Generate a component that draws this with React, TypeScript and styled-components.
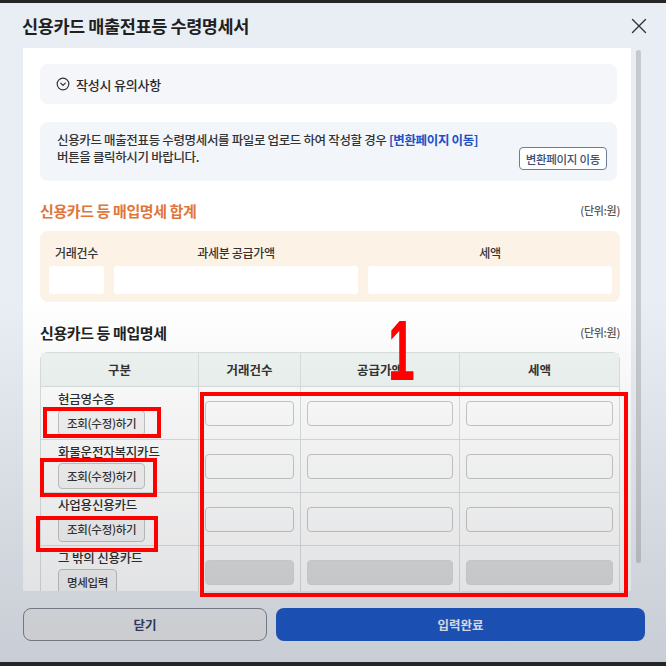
import styled, { createGlobalStyle } from "styled-components";

const GlobalStyle = createGlobalStyle`
  html, body { margin: 0; padding: 0; }
  body { font-family: "Noto Sans CJK KR", "Noto Sans", sans-serif; }
`;

const Page = styled.div`
  position: relative;
  width: 666px;
  height: 666px;
  background: #262626;
  padding: 3px 0 4px;
  box-sizing: border-box;
  overflow: hidden;
`;

const Modal = styled.div`
  height: 659px;
  background: #e9eef5;
  display: flex;
  flex-direction: column;
`;

const Header = styled.div`
  height: 45px;
  display: flex;
  align-items: center;
  justify-content: space-between;
  padding: 0 18px 0 22px;
  box-sizing: border-box;
`;

const Title = styled.h1`
  margin: 0;
  font-size: 17.5px;
  font-weight: 700;
  color: #1f1f1f;
  letter-spacing: -0.4px;
`;

const CloseButton = styled.button`
  border: 0;
  background: none;
  padding: 0;
  width: 18px;
  height: 18px;
  display: flex;
  align-items: center;
  justify-content: center;
`;

const BodyRow = styled.div`
  display: flex;
  align-items: flex-start;
  gap: 5px;
  padding-left: 23px;
`;

const Panel = styled.div`
  width: 608px;
  height: 543px;
  background: #fff;
  overflow: hidden;
  padding: 16px 11px 0 17px;
  box-sizing: border-box;
`;

const Scrollbar = styled.div`
  width: 5px;
  height: 513px;
  margin-top: 2px;
  border-radius: 3px;
  background: #c7c9cd;
`;

const NoticeBox = styled.div`
  height: 40px;
  margin-right: 3px;
  background: #f4f6fa;
  border-radius: 8px;
  display: flex;
  align-items: center;
  gap: 6px;
  padding-left: 16px;
  font-size: 13px;
  font-weight: 500;
  color: #2a2a2a;
  letter-spacing: -0.2px;
`;

const InfoBox = styled.div`
  margin: 18px 3px 0 0;
  height: 59px;
  background: #f2f5fa;
  border-radius: 8px;
  display: flex;
  justify-content: space-between;
  align-items: flex-end;
  padding: 9px 10px 11px 17px;
  box-sizing: border-box;
`;

const InfoText = styled.p`
  margin: 0;
  align-self: flex-start;
  font-size: 12.5px;
  font-weight: 500;
  line-height: 17px;
  color: #333;
  letter-spacing: -0.35px;
`;

const LinkText = styled.span`
  color: #2150c4;
  font-weight: 700;
`;

const OutlineButton = styled.button`
  height: 23px;
  padding: 0 6px;
  border: 1px solid #6f7c93;
  border-radius: 4px;
  background: #fff;
  font-family: inherit;
  font-size: 11.5px;
  font-weight: 500;
  color: #3d4f75;
  letter-spacing: -0.3px;
`;

const SectionHead = styled.div<{ $top: number }>`
  display: flex;
  justify-content: space-between;
  align-items: center;
  margin-top: ${p => p.$top}px;
  height: 20px;
`;

const SectionTitle = styled.h2<{ $accent?: boolean }>`
  margin: 0;
  font-size: 15px;
  font-weight: 700;
  letter-spacing: -0.4px;
  color: ${p => (p.$accent ? "#e0763a" : "#222")};
`;

const Unit = styled.span`
  font-size: 11px;
  font-weight: 500;
  color: #555;
  letter-spacing: -0.3px;
`;

const SumBox = styled.div`
  margin-top: 11px;
  height: 71px;
  background: #fdf2e6;
  border-radius: 8px;
  padding: 7px 8px 8px 9px;
  box-sizing: border-box;
  display: grid;
  grid-template-columns: 55px 1fr 1fr;
  grid-template-rows: 28px 28px;
  column-gap: 10px;
`;

const SumLabel = styled.span<{ $center?: boolean }>`
  font-size: 12px;
  font-weight: 500;
  color: #333;
  letter-spacing: -0.3px;
  align-self: center;
  padding-left: ${p => (p.$center ? 0 : 6)}px;
  text-align: ${p => (p.$center ? "center" : "left")};
`;

const SumInput = styled.div`
  background: #fff;
  border-radius: 3px;
`;

const Table = styled.div`
  margin-top: 10px;
  border: 1px solid #d9e0de;
  border-bottom: 0;
  border-radius: 8px 8px 0 0;
  display: grid;
  grid-template-columns: 158px 102px 159px 1fr;
`;

const HeadCell = styled.div<{ $last?: boolean }>`
  height: 33px;
  background: #eef5f2;
  border-right: ${p => (p.$last ? "0" : "1px solid #d9e0de")};
  border-bottom: 1px solid #d9e0de;
  display: flex;
  align-items: center;
  justify-content: center;
  font-size: 12.5px;
  font-weight: 700;
  color: #333;
`;

const LabelCell = styled.div`
  height: 53px;
  padding: 3px 0 0 17px;
  box-sizing: border-box;
  border-right: 1px solid #d9e0de;
  border-bottom: 1px solid #d9e0de;
  display: flex;
  flex-direction: column;
  align-items: flex-start;
  gap: 3px;
`;

const RowLabel = styled.span`
  font-size: 12.5px;
  font-weight: 500;
  line-height: 17px;
  color: #2b2b2b;
  letter-spacing: -0.2px;
`;

const SmallButton = styled.button`
  height: 26px;
  padding: 0 8px;
  border: 1px solid #c5c5c5;
  border-radius: 4px;
  background: #f6f6f6;
  font-family: inherit;
  font-size: 11.5px;
  font-weight: 500;
  color: #333;
  letter-spacing: -0.3px;
`;

const InputCell = styled.div<{ $last?: boolean }>`
  height: 53px;
  padding: 0 6px;
  box-sizing: border-box;
  border-right: ${p => (p.$last ? "0" : "1px solid #d9e0de")};
  border-bottom: 1px solid #d9e0de;
  display: flex;
  align-items: center;
`;

const CellInput = styled.div<{ $disabled?: boolean }>`
  width: 100%;
  height: 25px;
  border-radius: 4px;
  box-sizing: border-box;
  border: 1px solid ${p => (p.$disabled ? "#dadada" : "#c9c9c9")};
  background: ${p => (p.$disabled ? "#dedede" : "transparent")};
`;

const Footer = styled.div`
  display: grid;
  grid-template-columns: 244px 1fr;
  gap: 9px;
  padding: 17px 21px 0 23px;
`;

const FooterButton = styled.button<{ $primary?: boolean }>`
  height: 33px;
  border-radius: 8px;
  font-family: inherit;
  font-size: 12.5px;
  font-weight: 700;
  border: ${p => (p.$primary ? "0" : "1.5px solid #7f8591")};
  background: ${p => (p.$primary ? "#1b57c8" : "#e8eaed")};
  color: ${p => (p.$primary ? "#f2f5ff" : "#2d3d66")};
`;

const Shade = styled.div`
  position: absolute;
  inset: 0;
  pointer-events: none;
  background: linear-gradient(to bottom, rgba(30, 35, 45, 0) 45%, rgba(30, 35, 45, 0.16) 100%);
`;

const RedBox = styled.div<{ $x: number; $y: number; $w: number; $h: number }>`
  position: absolute;
  left: ${p => p.$x}px;
  top: ${p => p.$y}px;
  width: ${p => p.$w}px;
  height: ${p => p.$h}px;
  border: 4px solid #ff0000;
  box-sizing: border-box;
`;

const RedNumber = styled.span`
  position: absolute;
  left: 388px;
  top: 307px;
  font-family: "Liberation Sans", Arial, sans-serif;
  font-size: 86px;
  line-height: 86px;
  font-weight: 700;
  color: #ff0000;
  transform: scaleX(0.56);
  transform-origin: left top;
`;

const ChevronCircle = () => (
  <svg width="14" height="14" viewBox="0 0 24 24" fill="none" stroke="#333" strokeWidth="2" strokeLinecap="round" strokeLinejoin="round">
    <circle cx="12" cy="12" r="10" />
    <path d="M8 10.5l4 4 4-4" />
  </svg>
);

const rows = [
  { label: "현금영수증", button: "조회(수정)하기", disabled: false },
  { label: "화물운전자복지카드", button: "조회(수정)하기", disabled: false },
  { label: "사업용신용카드", button: "조회(수정)하기", disabled: false },
  { label: "그 밖의 신용카드", button: "명세입력", disabled: true },
];

export default function App() {
  return (
    <>
      <GlobalStyle />
      <Page>
        <Modal>
          <Header>
            <Title>신용카드 매출전표등 수령명세서</Title>
            <CloseButton aria-label="닫기">
              <svg width="16" height="16" viewBox="0 0 16 16" stroke="#333" strokeWidth="1.4" strokeLinecap="round">
                <path d="M1.5 1.5l13 13M14.5 1.5l-13 13" />
              </svg>
            </CloseButton>
          </Header>
          <BodyRow>
            <Panel>
              <NoticeBox>
                <ChevronCircle />
                작성시 유의사항
              </NoticeBox>
              <InfoBox>
                <InfoText>
                  신용카드 매출전표등 수령명세서를 파일로 업로드 하여 작성할 경우 <LinkText>[변환페이지 이동]</LinkText>
                  <br />
                  버튼을 클릭하시기 바랍니다.
                </InfoText>
                <OutlineButton>변환페이지 이동</OutlineButton>
              </InfoBox>

              <SectionHead $top={19}>
                <SectionTitle $accent>신용카드 등 매입명세 합계</SectionTitle>
                <Unit>(단위:원)</Unit>
              </SectionHead>
              <SumBox>
                <SumLabel>거래건수</SumLabel>
                <SumLabel $center>과세분 공급가액</SumLabel>
                <SumLabel $center>세액</SumLabel>
                <SumInput />
                <SumInput />
                <SumInput />
              </SumBox>

              <SectionHead $top={20}>
                <SectionTitle>신용카드 등 매입명세</SectionTitle>
                <Unit>(단위:원)</Unit>
              </SectionHead>
              <Table>
                <HeadCell>구분</HeadCell>
                <HeadCell>거래건수</HeadCell>
                <HeadCell>공급가액</HeadCell>
                <HeadCell $last>세액</HeadCell>
                {rows.map(r => (
                  <>
                    <LabelCell key={r.label}>
                      <RowLabel>{r.label}</RowLabel>
                      <SmallButton>{r.button}</SmallButton>
                    </LabelCell>
                    <InputCell><CellInput $disabled={r.disabled} /></InputCell>
                    <InputCell><CellInput $disabled={r.disabled} /></InputCell>
                    <InputCell $last><CellInput $disabled={r.disabled} /></InputCell>
                  </>
                ))}
              </Table>
            </Panel>
            <Scrollbar />
          </BodyRow>
          <Footer>
            <FooterButton>닫기</FooterButton>
            <FooterButton $primary>입력완료</FooterButton>
          </Footer>
        </Modal>
        <Shade />
        <RedNumber>1</RedNumber>
        <RedBox $x={200} $y={392} $w={428} $h={205} />
        <RedBox $x={43} $y={407} $w={118} $h={31} />
        <RedBox $x={40} $y={458} $w={117} $h={39} />
        <RedBox $x={36} $y={516} $w={122} $h={36} />
      </Page>
    </>
  );
}
